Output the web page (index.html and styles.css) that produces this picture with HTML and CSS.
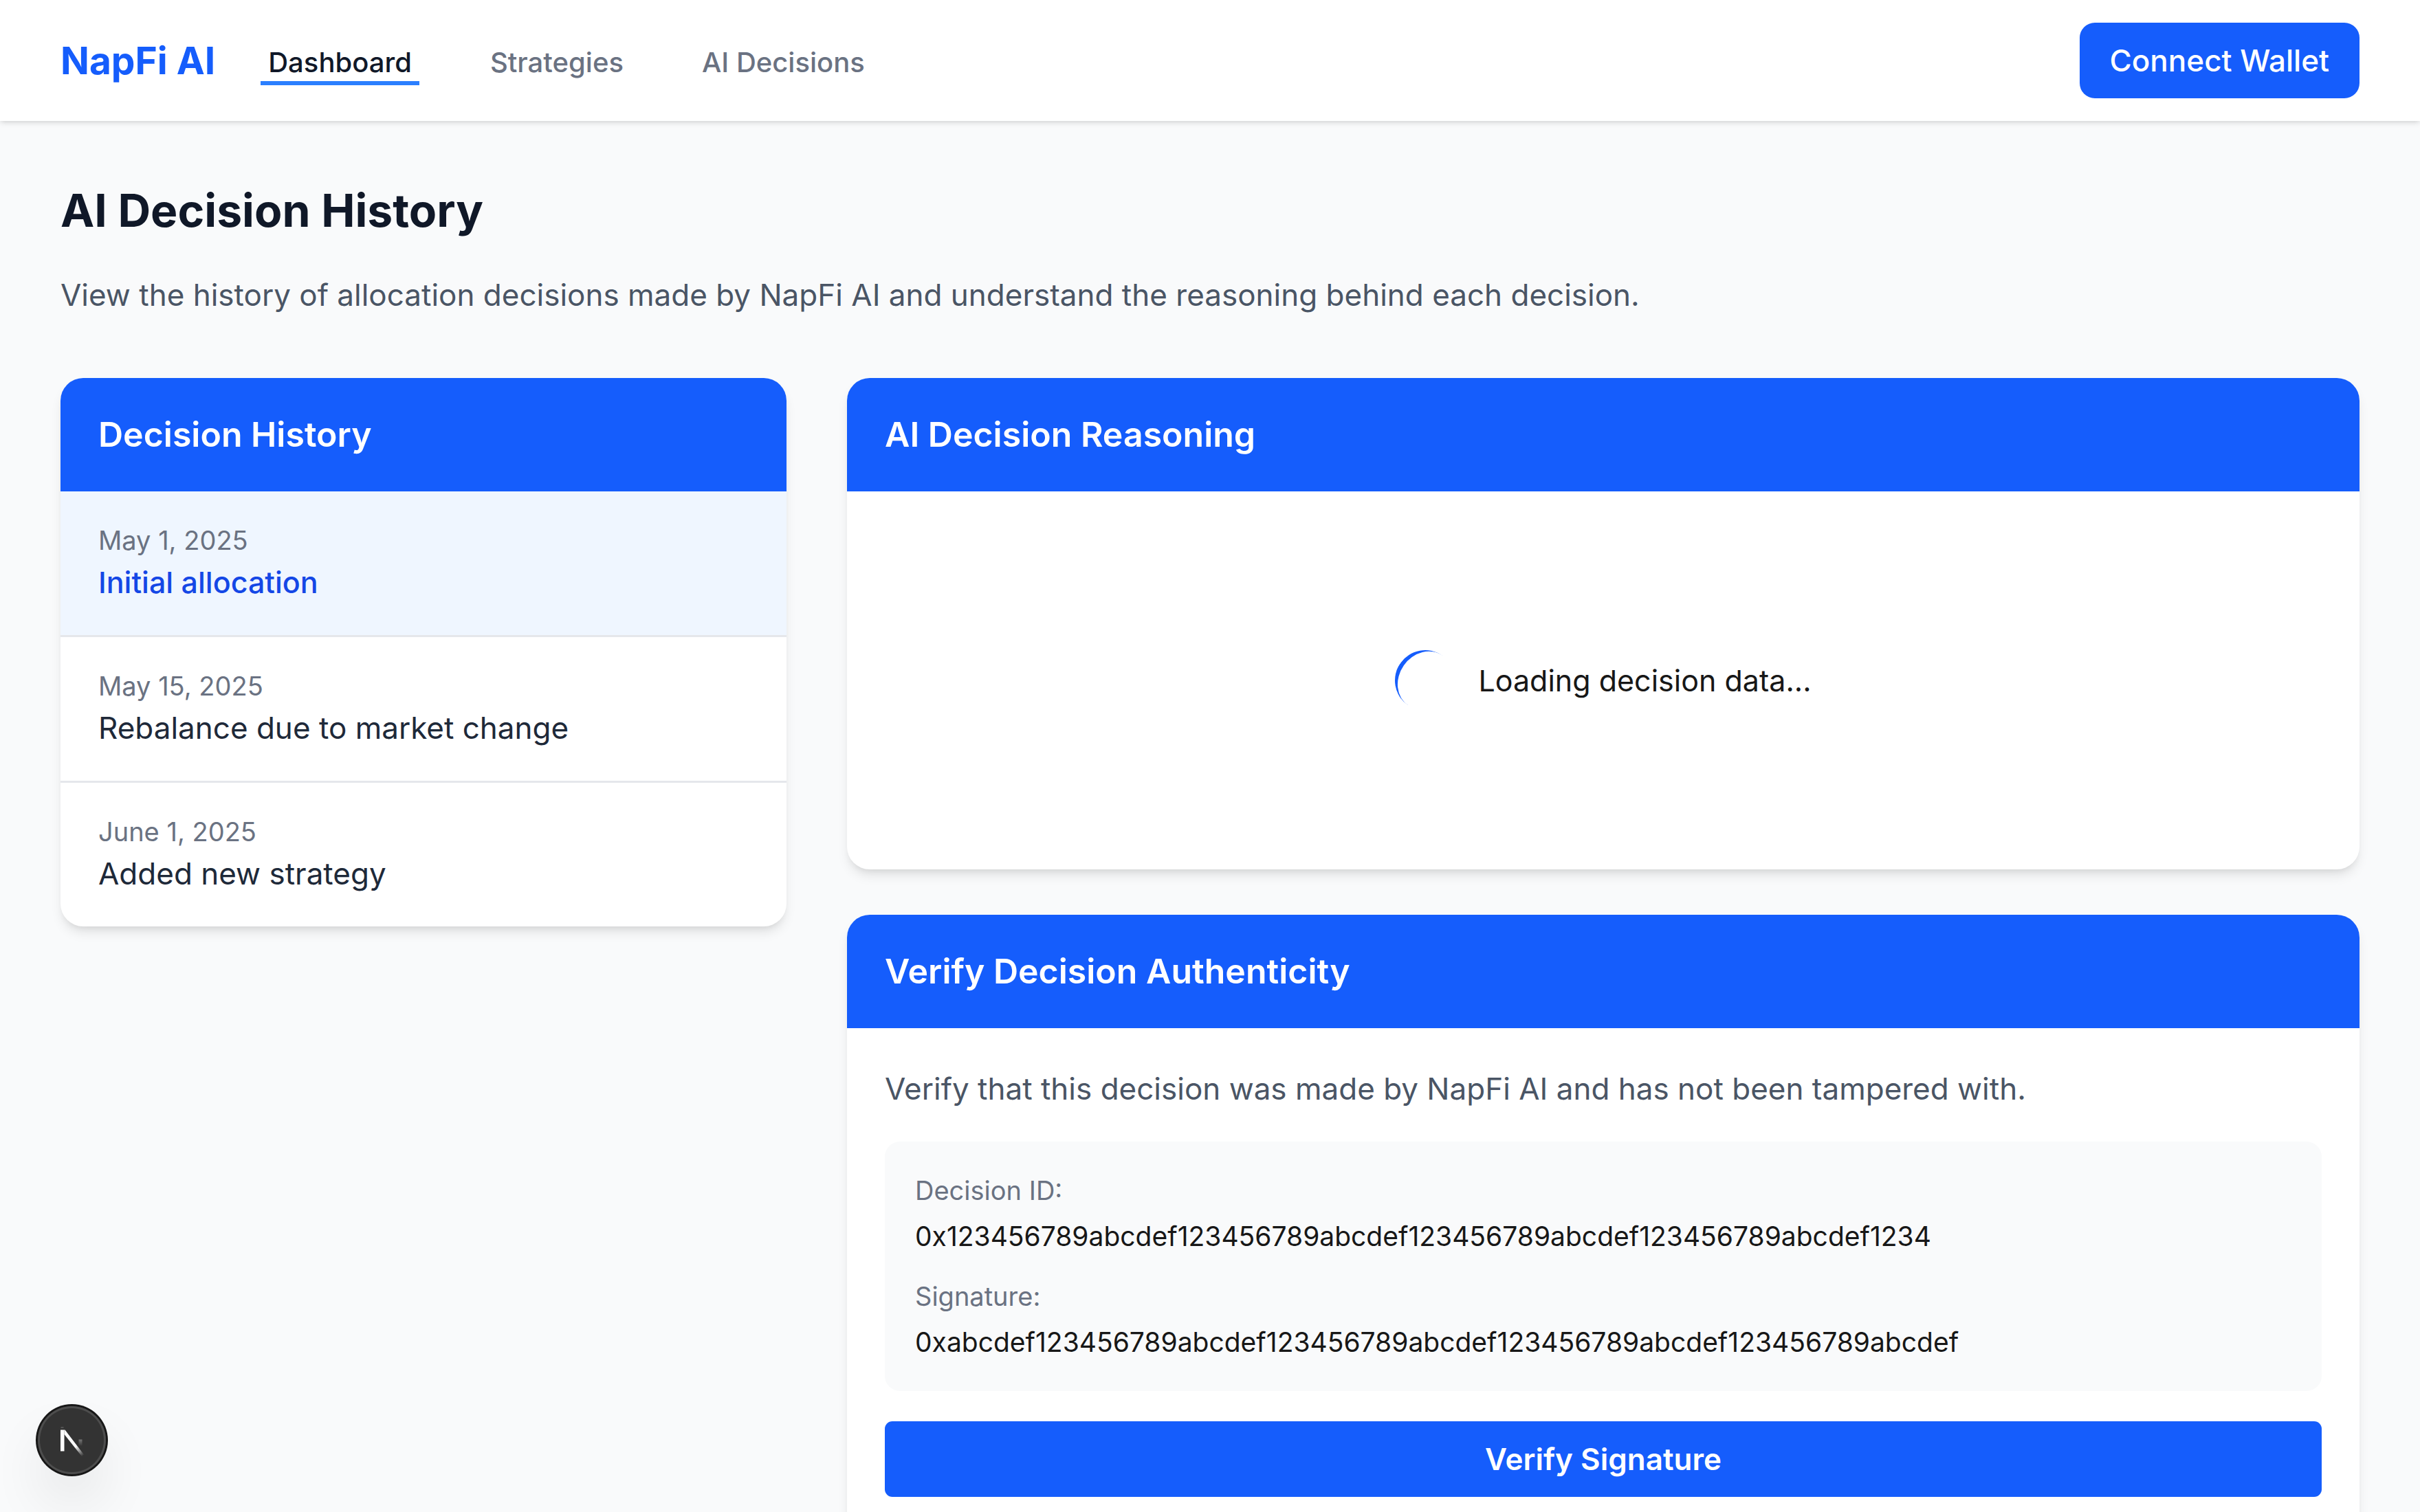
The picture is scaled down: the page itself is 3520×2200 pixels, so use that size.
FILE: index.html
```html
<!DOCTYPE html>
<html lang="en">
<head>
  <meta charset="utf-8">
  <title>NapFi AI</title>
  <link rel="stylesheet" href="styles.css">
</head>
<body>
  <header class="topbar">
    <a class="brand" href="#">NapFi AI</a>
    <nav class="nav">
      <a class="nav-link active" href="#">Dashboard</a>
      <a class="nav-link" href="#">Strategies</a>
      <a class="nav-link" href="#">AI Decisions</a>
    </nav>
    <button class="wallet" type="button">Connect Wallet</button>
  </header>

  <main class="page">
    <h1 class="page-title">AI Decision History</h1>
    <p class="lead">View the history of allocation decisions made by NapFi AI and understand the reasoning behind each decision.</p>

    <div class="columns">
      <section class="card">
        <h2 class="card-title">Decision History</h2>
        <ul class="history">
          <li class="entry selected">
            <p class="entry-date">May 1, 2025</p>
            <p class="entry-name">Initial allocation</p>
          </li>
          <li class="entry">
            <p class="entry-date">May 15, 2025</p>
            <p class="entry-name">Rebalance due to market change</p>
          </li>
          <li class="entry">
            <p class="entry-date">June 1, 2025</p>
            <p class="entry-name">Added new strategy</p>
          </li>
        </ul>
      </section>

      <div class="details">
        <section class="card">
          <h2 class="card-title">AI Decision Reasoning</h2>
          <div class="loading">
            <span class="spinner"></span>
            <span>Loading decision data...</span>
          </div>
        </section>

        <section class="card">
          <h2 class="card-title">Verify Decision Authenticity</h2>
          <div class="verify">
            <p class="verify-text">Verify that this decision was made by NapFi AI and has not been tampered with.</p>
            <dl class="proof">
              <div class="proof-item">
                <dt>Decision ID:</dt>
                <dd>0x123456789abcdef123456789abcdef123456789abcdef123456789abcdef1234</dd>
              </div>
              <div class="proof-item">
                <dt>Signature:</dt>
                <dd>0xabcdef123456789abcdef123456789abcdef123456789abcdef123456789abcdef</dd>
              </div>
            </dl>
            <button class="verify-button" type="button">Verify Signature</button>
          </div>
        </section>
      </div>
    </div>
  </main>

  <button class="dev-badge" type="button" aria-label="Open developer tools">
    <svg class="dev-logo" viewBox="0 0 40 40" fill="none" aria-hidden="true">
      <defs>
        <linearGradient id="diag" x1="24" y1="29" x2="35" y2="43" gradientUnits="userSpaceOnUse">
          <stop stop-color="#fff"/>
          <stop offset="1" stop-color="#fff" stop-opacity="0"/>
        </linearGradient>
        <linearGradient id="stem" x1="0" y1="18" x2="0" y2="28" gradientUnits="userSpaceOnUse">
          <stop stop-color="#fff" stop-opacity="0.35"/>
          <stop offset="1" stop-color="#fff" stop-opacity="0"/>
        </linearGradient>
      </defs>
      <path d="M3.500 1H7.500" stroke="#777" stroke-width="1"/>
      <path d="M3 4.500H8.500V35.500H3Z" fill="#fff"/>
      <path d="M8.500 4.500H9.500L37 40.500L34 43L8.500 11Z" fill="url(#diag)"/>
      <path d="M29.500 18.500H34.500V28H29.500Z" fill="url(#stem)"/>
    </svg>
  </button>
</body>
</html>
```
FILE: styles.css
```css
* {
  box-sizing: border-box;
  margin: 0;
  padding: 0;
}

body {
  background: #f9fafb;
  color: #171717;
  font-family: Inter, sans-serif;
  font-size: 44px;
  line-height: 66px;
}

button {
  border: 0;
  font: inherit;
  font-weight: 500;
  color: #fff;
  background: #155dfc;
}

a {
  text-decoration: none;
}

.topbar {
  display: flex;
  align-items: center;
  height: 176px;
  padding: 0 88px;
  background: #fff;
  box-shadow: 0 3px 8px rgba(0, 0, 0, 0.1), 0 3px 6px -3px rgba(0, 0, 0, 0.1);
}

.brand {
  margin-right: 66px;
  color: #155dfc;
  font-size: 55px;
  font-weight: 700;
  line-height: 77px;
}

.nav {
  display: flex;
  gap: 92px;
}

.nav-link {
  padding: 11px 11px 0;
  border-bottom: 6px solid transparent;
  color: #6a7282;
  font-size: 40px;
  font-weight: 500;
  line-height: 55px;
}

.nav-link.active {
  border-color: #2b7fff;
  color: #101828;
}

.wallet {
  height: 110px;
  margin-left: auto;
  padding: 0 44px;
  border-radius: 22px;
}

.page {
  padding: 88px;
}

.page-title {
  margin-bottom: 48px;
  color: #101828;
  font-size: 66px;
  font-weight: 700;
  line-height: 84px;
}

.lead {
  margin-bottom: 88px;
  color: #4a5565;
}

.columns {
  display: grid;
  grid-template-columns: repeat(3, 1fr);
  align-items: start;
  gap: 88px;
}

.details {
  display: grid;
  grid-column: span 2;
  gap: 66px;
}

.card {
  overflow: hidden;
  border-radius: 33px;
  background: #fff;
  box-shadow: 0 11px 17px -3px rgba(0, 0, 0, 0.1), 0 6px 11px -6px rgba(0, 0, 0, 0.1);
}

.card-title {
  padding: 44px 55px;
  background: #155dfc;
  color: #fff;
  font-size: 50px;
  font-weight: 600;
  line-height: 77px;
}

.history {
  list-style: none;
}

.entry {
  padding: 44px 55px;
  color: #1e2939;
}

.entry + .entry {
  border-top: 3px solid #e5e7eb;
}

.entry.selected {
  background: #eff6ff;
}

.entry-date {
  color: #6a7282;
  font-size: 38px;
  line-height: 55px;
}

.selected .entry-name {
  color: #1447e6;
  font-size: 43px;
  font-weight: 500;
}

.loading {
  display: flex;
  align-items: center;
  justify-content: center;
  gap: 33px;
  min-height: 550px;
  font-size: 43px;
}

.spinner {
  width: 88px;
  height: 88px;
  border-bottom: 6px solid #155dfc;
  border-radius: 50%;
  transform: rotate(125deg);
}

.verify {
  display: flex;
  flex-direction: column;
  gap: 44px;
  padding: 55px;
}

.verify-text {
  color: #4a5565;
}

.proof {
  display: grid;
  gap: 33px;
  padding: 44px;
  border-radius: 22px;
  background: #f9fafb;
  font-size: 39px;
  line-height: 55px;
}

.proof-item {
  display: grid;
  gap: 11px;
}

.proof dt {
  color: #6a7282;
  font-size: 38px;
}

.verify-button {
  height: 110px;
  border-radius: 11px;
  font-weight: 600;
}

.dev-badge {
  position: fixed;
  bottom: 55px;
  left: 55px;
  display: flex;
  align-items: center;
  justify-content: center;
  width: 99px;
  height: 99px;
  border-radius: 50%;
  background: #333;
  box-shadow: 0 0 0 3px #171717, inset 0 0 0 3px #4d4d4d, 0 44px 88px -22px rgba(0, 0, 0, 0.24);
}

.dev-logo {
  width: 40px;
  height: 40px;
  overflow: visible;
}
```
